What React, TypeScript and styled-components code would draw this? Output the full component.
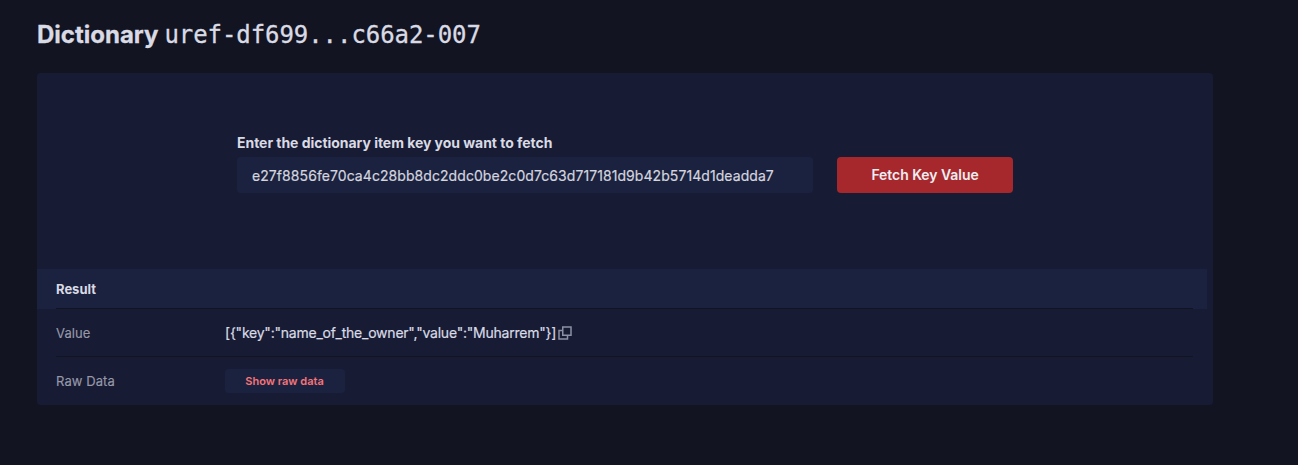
import React from "react";
import styled, { createGlobalStyle } from "styled-components";

const GlobalStyle = createGlobalStyle`
  * { box-sizing: border-box; }
  body {
    margin: 0;
    background: #121521;
    color: #d9dae4;
    font-family: Inter, "Liberation Sans", sans-serif;
    font-size: 14px;
    -webkit-font-smoothing: antialiased;
  }
`;

const Page = styled.main`
  width: 1213px;
  padding: 19px 0 0 37px;
`;

const Title = styled.h1`
  display: flex;
  align-items: baseline;
  gap: 6px;
  height: 32px;
  margin: 0 0 22px;
  font-size: 24px;
  line-height: 32px;
  font-weight: 700;
  white-space: nowrap;
  -webkit-text-stroke: 0.3px currentColor;
`;

const Address = styled.span`
  font-family: "DejaVu Sans Mono", monospace;
  font-size: 24px;
  font-weight: 400;
  letter-spacing: -0.07px;
`;

const Card = styled.section`
  height: 332px;
  border-radius: 4px;
  background: #171c34;
`;

const Form = styled.form`
  display: flex;
  align-items: flex-end;
  justify-content: center;
  gap: 24px;
  height: 196px;
  padding-bottom: 76px;
`;

const Field = styled.label`
  display: flex;
  flex-direction: column;
  gap: 4px;
  width: 576px;
  font-weight: 700;
  line-height: 20px;
  letter-spacing: -0.04px;
`;

const Input = styled.input`
  height: 36px;
  padding: 0 15px;
  border: 0;
  border-radius: 4px;
  outline: 0;
  background: #1b2240;
  color: #d4d5df;
  font: 400 14px Inter, "Liberation Sans", sans-serif;
  letter-spacing: 0.07px;
  -webkit-text-stroke: 0.2px currentColor;
`;

const Button = styled.button<{ $small?: boolean }>`
  width: ${(p) => (p.$small ? 120 : 176)}px;
  height: ${(p) => (p.$small ? 24 : 36)}px;
  padding: ${(p) => (p.$small ? "0 1px 0 0" : "0 0 2px")};
  border: 0;
  border-radius: 4px;
  background: ${(p) => (p.$small ? "#1b2240" : "#a6282c")};
  color: ${(p) => (p.$small ? "#f77478" : "#eeedf2")};
  font: 600 ${(p) => (p.$small ? 11 : 14)}px Inter, "Liberation Sans", sans-serif;
  letter-spacing: ${(p) => (p.$small ? 0 : -0.06)}px;
`;

const ResultHeader = styled.header`
  width: 1170px;
  height: 40px;
  padding-left: 19px;
  background: #1b2240;
  font-size: 13px;
  font-weight: 700;
  line-height: 40px;
`;

const Rows = styled.dl`
  width: 1137px;
  margin: -1px 0 0 19px;
`;

const Row = styled.div`
  display: flex;
  align-items: center;
  height: 48px;
  border-top: 1px solid #121521;
`;

const Term = styled.dt`
  width: 169px;
  color: #9698a9;
  font-size: 13px;
  letter-spacing: 0.08px;
  -webkit-text-stroke: 0.15px currentColor;
`;

const Detail = styled.dd`
  display: flex;
  align-items: center;
  gap: 2px;
  margin: 0;
`;

const Value = styled.span`
  letter-spacing: -0.225px;
  -webkit-text-stroke: 0.2px currentColor;
`;

const CopyIcon = () => (
  <svg width="14" height="14" viewBox="0 0 14 14" fill="none" stroke="#8d90a4" strokeWidth="1.5" aria-hidden="true">
    <path d="M4.75 1h8.25v8.25h-8.25z" />
    <path d="M4.7 4.5H1V13h8.5V9.3" />
  </svg>
);

export default function App() {
  return (
    <>
      <GlobalStyle />
      <Page>
        <Title>
          <span>Dictionary</span>
          <Address>uref-df699...c66a2-007</Address>
        </Title>
        <Card>
          <Form onSubmit={(e) => e.preventDefault()}>
            <Field>
              Enter the dictionary item key you want to fetch
              <Input defaultValue="e27f8856fe70ca4c28bb8dc2ddc0be2c0d7c63d717181d9b42b5714d1deadda7" />
            </Field>
            <Button type="submit">Fetch Key Value</Button>
          </Form>
          <ResultHeader>Result</ResultHeader>
          <Rows>
            <Row>
              <Term>Value</Term>
              <Detail>
                <Value>{'[{"key":"name_of_the_owner","value":"Muharrem"}]'}</Value>
                <CopyIcon />
              </Detail>
            </Row>
            <Row>
              <Term>Raw Data</Term>
              <Detail>
                <Button type="button" $small>Show raw data</Button>
              </Detail>
            </Row>
          </Rows>
        </Card>
      </Page>
    </>
  );
}
